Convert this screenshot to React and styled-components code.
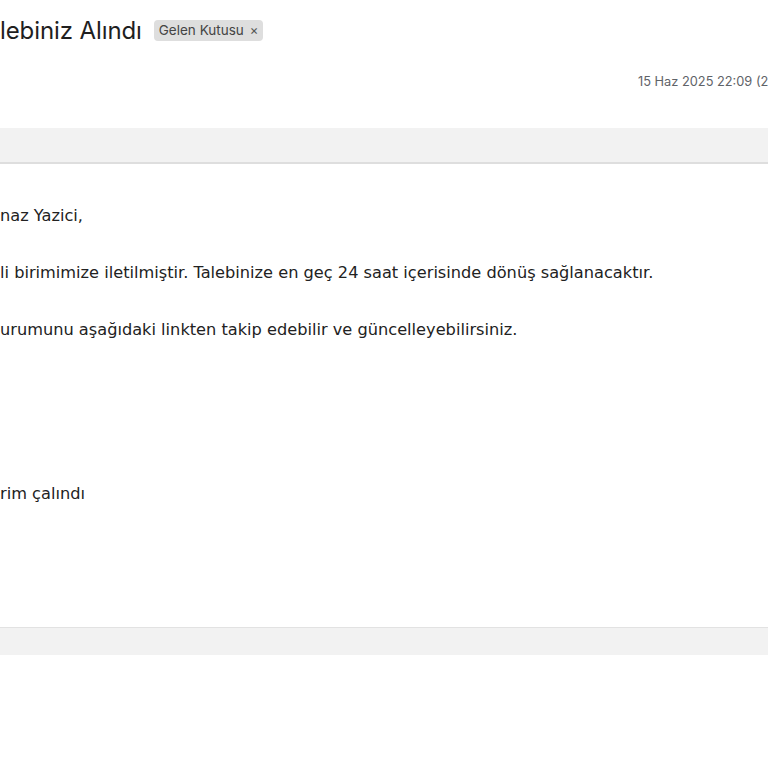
import React from 'react';
import styled, { createGlobalStyle } from 'styled-components';

const Global = createGlobalStyle`
  html, body {
    margin: 0;
    padding: 0;
    background: #fff;
  }
  body {
    width: 768px;
    height: 768px;
    overflow: hidden;
  }
`;

const Page = styled.div`
  width: 768px;
  height: 768px;
  overflow: hidden;
  background: #fff;
  font-family: Inter, Roboto, 'Liberation Sans', sans-serif;
`;

const Header = styled.div`
  display: flex;
  align-items: center;
  gap: 12px;
  padding: 15px 0 0 0;
  height: 30px;
`;

const Subject = styled.h2`
  margin: 0;
  font-size: 24px;
  font-weight: 400;
  color: #1f1f1f;
  letter-spacing: -0.1px;
  white-space: nowrap;
`;

const Chip = styled.span`
  display: inline-flex;
  align-items: center;
  gap: 6px;
  height: 21px;
  padding: 0 5px;
  border-radius: 4px;
  background: #dedede;
  color: #444;
  font-size: 13.5px;
  white-space: nowrap;
`;

const Close = styled.span`
  font-size: 13px;
  color: #555;
`;

const MetaRow = styled.div`
  display: flex;
  padding: 29px 0 0 638px;
  height: 20px;
`;

const Date = styled.span`
  font-size: 12.8px;
  color: #5f6368;
  white-space: nowrap;
`;

const Band = styled.div`
  height: ${p => p.$h}px;
  margin-top: ${p => p.$top}px;
  background: #f2f2f2;
  border-bottom: ${p => (p.$bottom ? '2px solid #dedede' : 'none')};
  border-top: ${p => (p.$topLine ? '1px solid #e2e2e2' : 'none')};
`;

const Body = styled.div`
  padding: 42px 0 0 0;
  font-family: 'DejaVu Sans', Verdana, sans-serif;
  font-size: 16.2px;
  color: #222;
  height: 421px;
`;

const Para = styled.p`
  margin: 0 0 ${p => p.$gap}px 0;
  line-height: 20px;
  white-space: nowrap;
`;

export default function App() {
  return (
    <Page>
      <Global />
      <Header>
        <Subject>lebiniz Alındı</Subject>
        <Chip>
          Gelen Kutusu <Close>×</Close>
        </Chip>
      </Header>
      <MetaRow>
        <Date>15 Haz 2025 22:09 (2 gün önce)</Date>
      </MetaRow>
      <Band $top={34} $h={34} $bottom />
      <Body>
        <Para $gap={37}>naz Yazici,</Para>
        <Para $gap={37}>li birimimize iletilmiştir. Talebinize en geç 24 saat içerisinde dönüş sağlanacaktır.</Para>
        <Para $gap={144}>urumunu aşağıdaki linkten takip edebilir ve güncelleyebilirsiniz.</Para>
        <Para $gap={0}>rim çalındı</Para>
      </Body>
      <Band $top={0} $h={27} $topLine />
    </Page>
  );
}
